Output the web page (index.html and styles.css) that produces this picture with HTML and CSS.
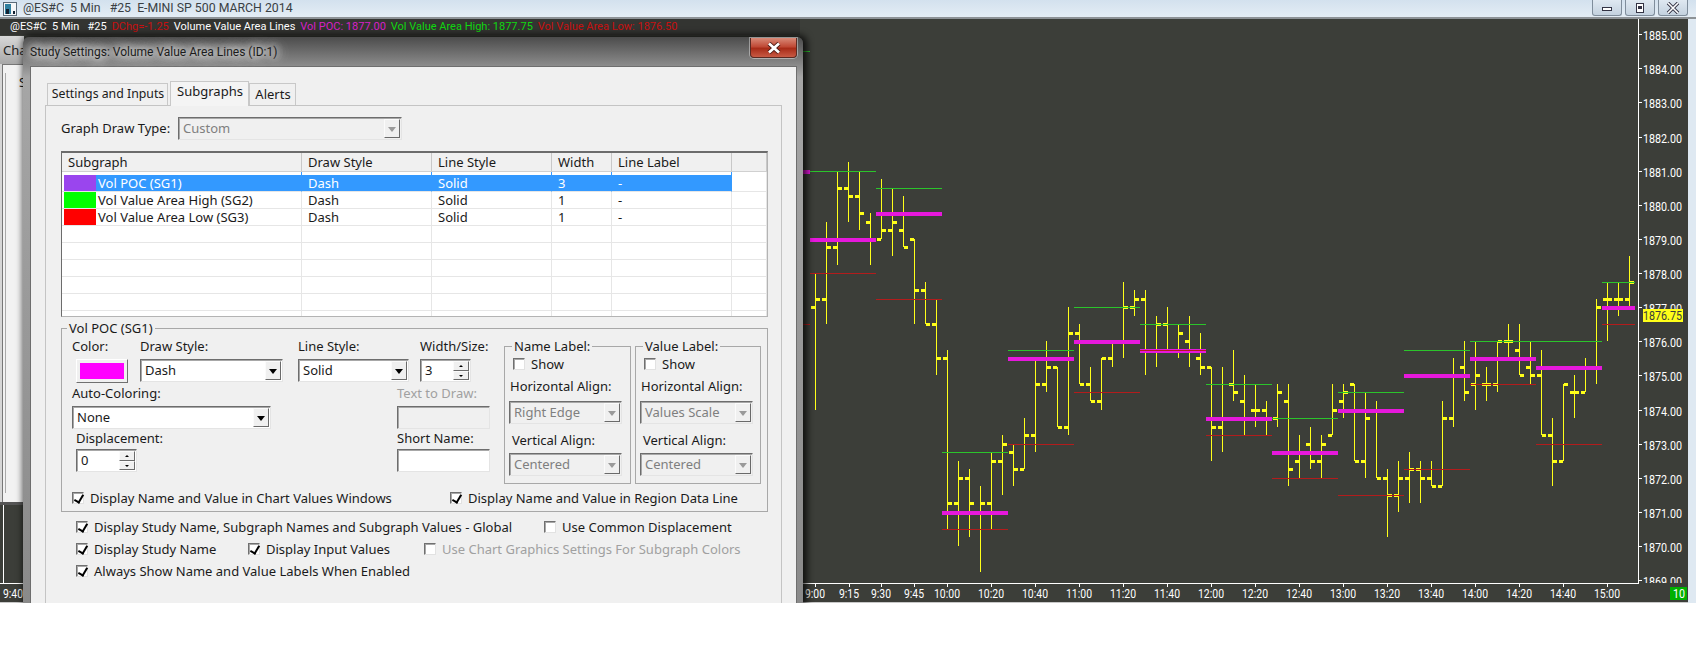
FILE: index.html
```html
<!DOCTYPE html>
<html lang="en">
<head>
    <meta charset="UTF-8">
    <meta name="viewport" content="width=device-width, initial-scale=1.0">
    <title>Study Settings: Volume Value Area Lines</title>
    <link rel="stylesheet" href="styles.css">
</head>
<body>

    <!-- Main chart window -->
    <div class="main-window">
        <div class="title-bar">
            <svg class="app-icon" width="14" height="14" viewBox="0 0 14 14">
                <rect x="0.5" y="0.5" width="13" height="13" fill="#f4f6f8" stroke="#5a6a78"/>
                <rect x="2" y="2" width="6" height="10" fill="#2f7f9f"/>
                <rect x="3" y="7" width="3" height="5" fill="#123"/>
                <rect x="10" y="9" width="2" height="3" fill="#123"/>
            </svg>
            <span class="title-text">@ES#C  5 Min   #25  E-MINI SP 500 MARCH 2014</span>
            <div class="win-buttons">
                <div class="win-btn">
                    <svg width="12" height="8" viewBox="0 0 12 8"><rect x="1.5" y="3.5" width="9" height="3" fill="#fff" stroke="#334"/></svg>
                </div>
                <div class="win-btn">
                    <svg width="12" height="10" viewBox="0 0 12 10"><rect x="2.5" y="0.5" width="7" height="9" fill="#fff" stroke="#334"/><rect x="4" y="3" width="4" height="3" fill="#334"/></svg>
                </div>
                <div class="win-btn">
                    <svg width="14" height="12" viewBox="0 0 14 12"><path d="M2 1 L12 11 M12 1 L2 11" stroke="#334" stroke-width="3.4"/><path d="M2 1 L12 11 M12 1 L2 11" stroke="#fff" stroke-width="1.6"/></svg>
                </div>
            </div>
        </div>

        <div class="chart-frame">
            <svg id="chart" class="chart" width="1688" height="584" viewBox="0 19 1688 584"></svg>
            <div class="study-line">
                <span>@ES#C  5 Min   #25</span>
                <span class="txt-dchg">DChg=-1.25</span>
                <span>Volume Value Area Lines</span>
                <span class="txt-poc">Vol POC: 1877.00</span>
                <span class="txt-high">Vol Value Area High: 1877.75</span>
                <span class="txt-low">Vol Value Area Low: 1876.50</span>
            </div>
        </div>
    </div>

    <!-- Window behind the dialog, only its left edge shows -->
    <div class="back-window">
        <div class="back-title">Chart</div>
        <div class="back-panel"><div class="back-list">Study</div></div>
    </div>

    <!-- Study settings dialog -->
    <div class="dialog">
        <div class="dialog-title">
            <span class="dialog-caption">Study Settings: Volume Value Area Lines (ID:1)</span>
            <div class="dialog-close">
                <svg width="18" height="12" viewBox="0 0 18 12"><path d="M4 1.5 L14 10.5 M14 1.5 L4 10.5" stroke="#4a1a14" stroke-width="4.4"/><path d="M4 1.5 L14 10.5 M14 1.5 L4 10.5" stroke="#fff" stroke-width="2.8"/></svg>
            </div>
        </div>

        <div class="dialog-client">
            <div class="tabs">
                <div class="tab tab-settings">Settings and Inputs</div>
                <div class="tab tab-active">Subgraphs</div>
                <div class="tab tab-alerts">Alerts</div>
            </div>

            <div class="tab-panel">
                <div class="draw-type">
                    <span class="draw-type-label">Graph Draw Type:</span>
                    <div class="combo combo-disabled combo-draw-type">Custom<i class="combo-btn"></i></div>
                </div>

                <div class="grid">
                    <table>
                        <colgroup>
                            <col class="col-name"><col class="col-draw"><col class="col-line"><col class="col-width"><col class="col-label"><col>
                        </colgroup>
                        <thead>
                            <tr><th>Subgraph</th><th>Draw Style</th><th>Line Style</th><th>Width</th><th>Line Label</th><th></th></tr>
                        </thead>
                        <tbody>
                            <tr class="row-selected">
                                <td class="cell-name"><i class="swatch swatch-purple"></i><span>Vol POC (SG1)</span></td>
                                <td>Dash</td><td>Solid</td><td>3</td><td>-</td><td class="cell-end"></td>
                            </tr>
                            <tr>
                                <td class="cell-name"><i class="swatch swatch-green"></i><span>Vol Value Area High (SG2)</span></td>
                                <td>Dash</td><td>Solid</td><td>1</td><td>-</td><td></td>
                            </tr>
                            <tr>
                                <td class="cell-name"><i class="swatch swatch-red"></i><span>Vol Value Area Low (SG3)</span></td>
                                <td>Dash</td><td>Solid</td><td>1</td><td>-</td><td></td>
                            </tr>
                            <tr><td></td><td></td><td></td><td></td><td></td><td></td></tr>
                            <tr><td></td><td></td><td></td><td></td><td></td><td></td></tr>
                            <tr><td></td><td></td><td></td><td></td><td></td><td></td></tr>
                            <tr><td></td><td></td><td></td><td></td><td></td><td></td></tr>
                            <tr><td></td><td></td><td></td><td></td><td></td><td></td></tr>
                            <tr><td></td><td></td><td></td><td></td><td></td><td></td></tr>
                        </tbody>
                    </table>
                </div>

                <!-- Subgraph group box -->
                <fieldset class="group group-main">
                    <legend>Vol POC (SG1)</legend>
                    <div class="group-body">
                        <div class="style-form">
                            <div class="form-row form-top">
                                <div class="field field-color">
                                    <label>Color:</label>
                                    <div class="color-btn"><i></i></div>
                                </div>
                                <div class="field field-draw">
                                    <label>Draw Style:</label>
                                    <div class="combo">Dash<i class="combo-btn"></i></div>
                                </div>
                                <div class="field field-line">
                                    <label>Line Style:</label>
                                    <div class="combo">Solid<i class="combo-btn"></i></div>
                                </div>
                                <div class="field field-size">
                                    <label>Width/Size:</label>
                                    <div class="spin">3<i class="spin-btns"><b></b><b></b></i></div>
                                </div>
                            </div>
                            <div class="form-row form-split form-auto">
                                <div class="field field-auto">
                                    <label>Auto-Coloring:</label>
                                    <div class="combo">None<i class="combo-btn"></i></div>
                                </div>
                                <div class="field field-text">
                                    <label class="label-disabled">Text to Draw:</label>
                                    <div class="edit edit-disabled"></div>
                                </div>
                            </div>
                            <div class="form-row form-split form-name">
                                <div class="field field-displacement">
                                    <label>Displacement:</label>
                                    <div class="spin">0<i class="spin-btns"><b></b><b></b></i></div>
                                </div>
                                <div class="field field-text">
                                    <label>Short Name:</label>
                                    <div class="edit"></div>
                                </div>
                            </div>
                        </div>

                        <fieldset class="group group-label">
                            <legend>Name Label:</legend>
                            <div class="check check-show"><i class="box"></i>Show</div>
                            <div class="align-label">Horizontal Align:</div>
                            <div class="combo combo-disabled combo-align">Right Edge<i class="combo-btn"></i></div>
                            <div class="align-label align-label-v">Vertical Align:</div>
                            <div class="combo combo-disabled combo-align">Centered<i class="combo-btn"></i></div>
                        </fieldset>

                        <fieldset class="group group-label">
                            <legend>Value Label:</legend>
                            <div class="check check-show"><i class="box"></i>Show</div>
                            <div class="align-label">Horizontal Align:</div>
                            <div class="combo combo-disabled combo-align">Values Scale<i class="combo-btn"></i></div>
                            <div class="align-label align-label-v">Vertical Align:</div>
                            <div class="combo combo-disabled combo-align">Centered<i class="combo-btn"></i></div>
                        </fieldset>
                    </div>
                    <div class="group-checks">
                        <div class="check check-chart-values"><i class="box box-on"></i>Display Name and Value in Chart Values Windows</div>
                        <div class="check"><i class="box box-on"></i>Display Name and Value in Region Data Line</div>
                    </div>
                </fieldset>

                <div class="check-row">
                    <div class="check check-global"><i class="box box-on"></i>Display Study Name, Subgraph Names and Subgraph Values - Global</div>
                    <div class="check"><i class="box"></i>Use Common Displacement</div>
                </div>
                <div class="check-row">
                    <div class="check check-study"><i class="box box-on"></i>Display Study Name</div>
                    <div class="check check-inputs"><i class="box box-on"></i>Display Input Values</div>
                    <div class="check check-disabled"><i class="box"></i>Use Chart Graphics Settings For Subgraph Colors</div>
                </div>
                <div class="check-row">
                    <div class="check"><i class="box box-on"></i>Always Show Name and Value Labels When Enabled</div>
                </div>
            </div>
        </div>
    </div>

    <script src="chart.js"></script>
</body>
</html>
```

FILE: styles.css
```css
* {
    box-sizing: border-box;
}

body {
    margin: 0;
    background-color: #ffffff;
    font-family: "Noto Sans", "Open Sans", sans-serif;
    font-size: 13px;
    color: #1a1a1a;
    overflow: hidden;
}

i {
    font-style: normal;
}

/* --- Main window --- */
.main-window {
    height: 603px;
    background: linear-gradient(90deg, #dbe6f0, #dfe9f2);
    overflow: hidden;
}

.title-bar {
    display: flex;
    align-items: flex-start;
    height: 19px;
    padding: 1px 8px 0 3px;
    background: linear-gradient(#d3e1ee, #e4edf5);
    border-bottom: 2px solid #8d9296;
}

.app-icon {
    margin-top: 1px;
}

.title-text {
    margin-left: 6px;
    line-height: 15px;
    font-family: "Roboto", sans-serif;
    font-size: 12.3px;
    color: #3a3f44;
    white-space: pre;
}

.win-buttons {
    display: flex;
    gap: 3px;
    margin-left: auto;
    margin-top: -1px;
}

.win-btn {
    display: flex;
    align-items: center;
    justify-content: center;
    width: 30px;
    height: 16px;
    background: linear-gradient(#dfe8f1, #c4d2df);
    border: 1px solid #7f8d9b;
    border-top: 0;
    border-radius: 0 0 3px 3px;
}

.chart-frame {
    position: relative;
    width: 1688px;
    height: 584px;
    background-color: #3c3e39;
}

/* sits over the top of the chart, the price scale runs up beside it */
.study-line {
    position: absolute;
    left: 0;
    top: 0;
    display: flex;
    gap: 5px;
    width: 800px;
    height: 16px;
    padding-left: 10px;
    background-color: #333431;
    color: #ffffff;
    font-family: "Roboto", sans-serif;
    font-size: 11px;
    line-height: 16px;
    white-space: pre;
}

.txt-dchg { color: #c81010; }
.txt-poc { color: #d820c8; }
.txt-high { color: #10d810; }
.txt-low { color: #c81010; }

.chart {
    display: block;
}

.chart text {
    font-family: "Roboto", sans-serif;
    font-size: 13px;
    fill: #ffffff;
}

/* --- Window behind the dialog --- */
.back-window {
    position: absolute;
    left: 0;
    top: 36px;
    width: 24px;
    height: 469px;
    overflow: hidden;
    background-color: #d6d6d6;
    border-bottom: 3px solid #555;
}

.back-title {
    height: 28px;
    padding: 6px 0 0 3px;
    background: linear-gradient(#d8d8d8, #a8a8a8);
    color: #222;
    line-height: 16px;
}

.back-panel {
    height: 440px;
    margin-left: 2px;
    padding: 8px 0 0 2px;
    background-color: #f2f2f2;
    border: 1px solid #777;
}

.back-list {
    height: 420px;
    padding: 0 0 0 13px;
    border-left: 1px solid #aaa;
    line-height: 18px;
    white-space: nowrap;
}

/* --- Dialog --- */
.dialog {
    position: absolute;
    left: 23px;
    top: 37px;
    width: 780px;
    height: 566px;
    padding: 0 6px 0 7px;
    background: linear-gradient(#4c4c4c, #8e8e8e 30px, #a6a6a6 40px, #8a8a8a);
    border-radius: 6px 6px 0 0;
    box-shadow: 2px 0 7px 2px rgba(0, 0, 0, 0.75);
    clip-path: inset(-12px -12px 0 -12px);
}

.dialog-title {
    display: flex;
    justify-content: space-between;
    height: 29px;
}

.dialog-caption {
    margin-top: 6px;
    line-height: 18px;
    font-family: "Roboto", sans-serif;
    font-size: 12px;
    color: #1c1c1c;
    text-shadow: 0 0 6px #e6e6e6, 0 0 10px #e6e6e6, 0 0 14px #e6e6e6, 0 0 14px #e6e6e6;
}

.dialog-close {
    display: flex;
    align-items: center;
    justify-content: center;
    width: 47px;
    height: 20px;
    margin-top: 1px;
    background: linear-gradient(#d98a78, #c04a36 45%, #a82c18 55%, #c85a44);
    border: 1px solid #5a2a22;
    border-top: 0;
    border-radius: 0 0 4px 4px;
    box-shadow: 0 0 0 1px rgba(255, 255, 255, 0.4);
}

.dialog-client {
    height: 537px;
    padding: 16px 14px 0;
    background-color: #f0f0f0;
    border: 1px solid #6e6e6e;
    border-bottom: 0;
}

/* --- Tabs --- */
.tabs {
    display: flex;
    align-items: flex-end;
    height: 22px;
    padding-left: 2px;
}

.tab {
    height: 22px;
    padding-left: 1px;
    background-color: #f0f0f0;
    border: 1px solid #c8c8c8;
    border-bottom: 0;
    line-height: 20px;
    text-align: center;
    white-space: nowrap;
}

.tab-settings { width: 121px; margin-right: 2px; font-size: 12.3px; }
.tab-alerts { width: 47px; }

.tab-active {
    position: relative;
    top: 1px;
    width: 79px;
    height: 25px;
    background-color: #f4f4f4;
    line-height: 19px;
}

.tab-panel {
    height: 500px;
    padding: 10px 13px 0 15px;
    background-color: #f0f0f0;
    border: 1px solid #c4c4c4;
}

.draw-type {
    display: flex;
    align-items: center;
    height: 24px;
}

.draw-type-label {
    width: 117px;
}

.combo-draw-type {
    width: 224px;
}

/* --- Common controls --- */
.combo,
.spin,
.edit {
    position: relative;
    height: 23px;
    padding-left: 4px;
    background-color: #ffffff;
    border: 1px solid;
    border-color: #6d6d6d #e4e4e4 #e4e4e4 #6d6d6d;
    box-shadow: inset 1px 1px 0 #a8a8a8;
    line-height: 21px;
}

.combo-btn {
    position: absolute;
    right: 1px;
    top: 1px;
    bottom: 1px;
    width: 16px;
    background-color: #f0f0f0;
    border: 1px solid;
    border-color: #fbfbfb #6a6a6a #6a6a6a #fbfbfb;
}

.combo-btn::after {
    content: "";
    position: absolute;
    left: 3px;
    top: 7px;
    border: 4px solid transparent;
    border-top: 5px solid #000000;
    border-bottom: 0;
}

.combo-disabled,
.edit-disabled {
    background-color: #f0f0f0;
    color: #7f7f7f;
}

.combo-disabled .combo-btn::after {
    border-top-color: #9a9a9a;
}

.spin-btns {
    position: absolute;
    right: 1px;
    top: 1px;
    bottom: 1px;
    display: flex;
    flex-direction: column;
    width: 16px;
}

.spin-btns b {
    position: relative;
    flex: 1;
    background-color: #f0f0f0;
    border: 1px solid;
    border-color: #fbfbfb #6a6a6a #6a6a6a #fbfbfb;
}

.spin-btns b::after {
    content: "";
    position: absolute;
    left: 5px;
    top: 3px;
    border: 2px solid transparent;
    border-bottom: 2px solid #000000;
    border-top: 0;
}

.spin-btns b:last-child::after {
    border-top: 2px solid #000000;
    border-bottom: 0;
}

.check {
    display: flex;
    align-items: center;
    gap: 6px;
    height: 18px;
    line-height: 18px;
    white-space: nowrap;
}

.box {
    position: relative;
    width: 12px;
    height: 12px;
    flex: none;
    background-color: #ffffff;
    border: 1px solid;
    border-color: #707070 #e2e2e2 #e2e2e2 #707070;
    box-shadow: inset 1px 1px 0 #a8a8a8;
}

.box-on::after {
    content: "";
    position: absolute;
    left: 3px;
    top: 0;
    width: 4px;
    height: 8px;
    border: solid #000000;
    border-width: 0 2px 2px 0;
    transform: rotate(30deg);
}

.check-disabled {
    color: #a0a0a0;
}

/* --- Subgraph grid --- */
.grid {
    height: 166px;
    margin-top: 11px;
    overflow: hidden;
    background-color: #ffffff;
    border: 1px solid #b4b4b4;
    border-top: 2px solid #6c6c6c;
    border-left: 1px solid #6c6c6c;
}

.grid table {
    width: 100%;
    table-layout: fixed;
    border-collapse: separate;
    border-spacing: 0;
}

.col-name { width: 240px; }
.col-draw { width: 130px; }
.col-line { width: 120px; }
.col-width { width: 60px; }
.col-label { width: 120px; }

.grid th {
    height: 18px;
    padding: 1px 0 0 6px;
    background-color: #f0f0f0;
    border-right: 1px solid #c8c8c8;
    border-bottom: 1px solid #d0d0d0;
    font-weight: normal;
    text-align: left;
    line-height: 17px;
}

.grid td {
    height: 17px;
    padding: 0 0 0 6px;
    border-right: 1px solid #e6e6e6;
    border-bottom: 1px solid #e6e6e6;
    line-height: 16px;
}

.grid tbody tr:first-child td {
    height: 20px;
    padding-top: 3px;
    background-clip: content-box;
}

.grid td.cell-name {
    padding-left: 2px;
}

.cell-name {
    white-space: nowrap;
}

.cell-name span {
    padding-left: 2px;
}

.swatch {
    display: inline-block;
    width: 32px;
    height: 16px;
    vertical-align: top;
}

.swatch-purple { background-color: #9a45ee; }
.swatch-green { background-color: #00ff00; }
.swatch-red { background-color: #ff0000; }

.row-selected td {
    color: #ffffff;
}

.grid .row-selected td {
    padding-left: 0;
    text-indent: 6px;
    background-color: #3399ff;
    border-right-color: #3399ff;
}

.grid .row-selected td.cell-name {
    padding-left: 2px;
    text-indent: 0;
}

.grid .row-selected td.cell-end {
    background: none;
    border-right-color: #e6e6e6;
}

/* --- Group boxes --- */
.group {
    min-width: 0;
    margin: 0;
    padding: 0;
    border: 1px solid #a8a8a8;
}

.group legend {
    height: 18px;
    margin-left: 5px;
    padding: 0 2px;
    line-height: 18px;
}

.group-main {
    height: 193px;
    margin-top: 2px;
}

.group-body {
    display: flex;
    gap: 4px;
    height: 146px;
}

.style-form {
    width: 428px;
    padding-left: 10px;
    margin-right: 10px;
}

.form-row {
    display: flex;
}

.form-split {
    justify-content: space-between;
}

.form-top .field label { margin-bottom: 4px; }
.form-auto { margin-top: 1px; }
.form-auto .field label { margin-bottom: 4px; }

.field label {
    display: block;
    height: 18px;
    margin-bottom: 2px;
    line-height: 18px;
    white-space: nowrap;
}

.label-disabled {
    color: #a0a0a0;
}

.field-color { width: 68px; }
.field-draw { width: 143px; margin-right: 15px; }
.field-line { width: 111px; margin-right: 11px; }
.field-size { width: 51px; }
.field-auto { width: 199px; }
.field-text { width: 93px; }
.field-displacement { width: 61px; margin-left: 4px; }

.color-btn {
    display: flex;
    align-items: center;
    justify-content: center;
    width: 52px;
    height: 24px;
    margin-left: 4px;
    background-color: #f0f0f0;
    border: 1px solid;
    border-color: #ffffff #707070 #707070 #ffffff;
}

.color-btn i {
    width: 44px;
    height: 16px;
    background-color: #ff00ff;
}

.group-label {
    flex: none;
    width: 127px;
    height: 147px;
    padding: 0 0 0 4px;
}

.group-label + .group-label {
    width: 126px;
}

.group-label legend {
    margin-left: 3px;
}

.check-show {
    margin-left: 4px;
}

.align-label {
    height: 18px;
    margin: 4px 0 6px 1px;
    line-height: 18px;
    white-space: nowrap;
}

.align-label-v {
    margin: 7px 0 4px 3px;
}

.combo-align {
    width: 113px;
}

.group-checks {
    display: flex;
    padding: 6px 0 0 10px;
}

.check-chart-values {
    width: 378px;
}

/* --- Checks below the group box --- */
.check-row {
    display: flex;
    height: 22px;
    align-items: center;
    padding-left: 15px;
}

.group-main + .check-row {
    margin-top: 4px;
}

.check-global { width: 468px; }
.check-study { width: 172px; }
.check-inputs { width: 176px; }
```

FILE: chart.js
```js
// Draws the bar chart: price bars, value area lines and both axes

const svg = document.getElementById('chart');
const NS = 'http://www.w3.org/2000/svg';

const priceY = p => Math.round(34.2 + (1885 - p) * 34.12);
const barX = i => 815 + i * 11;

// high, low, open, close for each 5 min bar, first one is 9:00
const bars = [
    [1878, 1874, 1877, 1877.25], [1879.5, 1876.5, 1877.25, 1878.75], [1881, 1878.25, 1878.75, 1880.5],
    [1881.25, 1879.5, 1880.5, 1880.25], [1881, 1879.25, 1880.25, 1879.75], [1879.75, 1878.25, 1879.5, 1879],
    [1880.75, 1879, 1879, 1879.25], [1880.5, 1878.5, 1879.25, 1879.5], [1880.25, 1878.75, 1879.25, 1878.75],
    [1879, 1876.5, 1879, 1877.5], [1877.75, 1876.5, 1877.5, 1876.5], [1877.25, 1875, 1876.5, 1875.5],
    [1875.75, 1870.5, 1875.5, 1871.25], [1872.5, 1870, 1871.25, 1872], [1872.25, 1870.25, 1872, 1871.25],
    [1871.75, 1869.25, 1871, 1871.25], [1872.75, 1870.5, 1871.25, 1872.5], [1873.25, 1871.5, 1872.5, 1873],
    [1873, 1871.75, 1872.75, 1872.25], [1873.75, 1872.25, 1872.25, 1873.25], [1875.5, 1872.75, 1873.25, 1874.75],
    [1876, 1874.5, 1874.75, 1875.25], [1875.25, 1873.5, 1875.25, 1873.5], [1877, 1873.25, 1873.5, 1876.25],
    [1876.5, 1874.75, 1876.25, 1874.75], [1875.25, 1874.25, 1874.75, 1874.25], [1875.5, 1874, 1874.25, 1875.5],
    [1876, 1875.25, 1875.5, 1876], [1877.75, 1875.5, 1876, 1877], [1877.5, 1876.75, 1877, 1877.25],
    [1877.5, 1875, 1877.25, 1875.75], [1876.75, 1875.25, 1875.75, 1876.5], [1877, 1875.75, 1876.5, 1875.75],
    [1876.5, 1875.5, 1875.75, 1876.25], [1876.75, 1875.25, 1876, 1875.75], [1876.25, 1875, 1875.5, 1875.25],
    [1875.25, 1872.5, 1875.25, 1873.5], [1875.25, 1872.75, 1873.5, 1873.75], [1875.75, 1874.25, 1874.75, 1874.5],
    [1875, 1873.25, 1874.25, 1873.75], [1874.75, 1873.5, 1874, 1874], [1874.25, 1873.25, 1874, 1873.75],
    [1874.75, 1873.5, 1873.75, 1874.5], [1874.75, 1871.75, 1874.25, 1872.25], [1873.25, 1872, 1872.5, 1872.75],
    [1873.5, 1872.25, 1873, 1872.5], [1873.25, 1872, 1872.5, 1873], [1874.75, 1873.25, 1873.25, 1874],
    [1874.75, 1873.75, 1874.25, 1874.5], [1874.75, 1872.5, 1874.75, 1872.5], [1874.5, 1872, 1872.5, 1873.75],
    [1874.25, 1872, 1874, 1872], [1872.25, 1870.25, 1872, 1871.5], [1872.5, 1871, 1871.5, 1872],
    [1872.75, 1871.25, 1872, 1872.25], [1872.5, 1871.25, 1872.25, 1872], [1872.5, 1871.75, 1872, 1871.75],
    [1874.25, 1871.75, 1871.75, 1873.75], [1875.5, 1873.5, 1873.75, 1875], [1876, 1874.25, 1875.25, 1874.5],
    [1876, 1874, 1874.75, 1875], [1875.25, 1874.25, 1874.75, 1874.75], [1876, 1874.5, 1874.75, 1876],
    [1876.5, 1875.5, 1876, 1876], [1876.5, 1875, 1875.75, 1875], [1876, 1874.75, 1875.25, 1875],
    [1875.75, 1873.25, 1875, 1873.25], [1873.75, 1871.75, 1873.25, 1872.5], [1874.75, 1872.5, 1872.5, 1874.75],
    [1875, 1873.75, 1874.5, 1874.5], [1875.5, 1874.5, 1874.5, 1875.25], [1877.25, 1874.75, 1875.25, 1877],
    [1877.75, 1876, 1877.25, 1877.25], [1877.75, 1876.75, 1877.25, 1877.25], [1878.5, 1877, 1877.25, 1877.75]
];

// value area lines for each half hour: x from, x to, poc, high, low
const periods = [
    [744, 810, 1881, 1884.5, 1876.5],
    [810, 876, 1879, 1881, 1878],
    [876, 942, 1879.75, 1880.5, 1877.25],
    [942, 1008, 1871, 1872.75, 1870.5],
    [1008, 1074, 1875.5, 1875.75, 1873],
    [1074, 1140, 1876, 1877, 1874.5],
    [1140, 1206, 1875.75, 1876.5, 1875.75],
    [1206, 1272, 1873.75, 1874.75, 1873.25],
    [1272, 1338, 1872.75, 1873.75, 1872],
    [1338, 1404, 1874, 1874.5, 1871.5],
    [1404, 1470, 1875, 1875.75, 1872.25],
    [1470, 1536, 1875.5, 1876, 1874.75],
    [1536, 1602, 1875.25, 1876, 1873],
    [1602, 1635, 1877, 1877.75, 1876.5]
];

const timeLabels = [
    ['9:00', 815], ['9:15', 849], ['9:30', 881], ['9:45', 914], ['10:00', 947], ['10:20', 991], ['10:40', 1035],
    ['11:00', 1079], ['11:20', 1123], ['11:40', 1167], ['12:00', 1211], ['12:20', 1255], ['12:40', 1299],
    ['13:00', 1343], ['13:20', 1387], ['13:40', 1431], ['14:00', 1475], ['14:20', 1519], ['14:40', 1563], ['15:00', 1607]
];

function add(tag, attrs, content) {
    const el = document.createElementNS(NS, tag);
    for (const key in attrs) el.setAttribute(key, attrs[key]);
    if (content) el.textContent = content;
    svg.appendChild(el);
    return el;
}

function rect(x, y, width, height, fill) {
    add('rect', { x, y, width, height, fill });
}

// --- Price bars ---
bars.forEach((bar, i) => {
    const x = barX(i);
    const top = priceY(bar[0]);
    rect(x, top, 1, priceY(bar[1]) - top, '#ffff19');
    rect(x - 4, priceY(bar[2]) - 1, 4, 3, '#ffff19');
    rect(x + 1, priceY(bar[3]) - 1, 4, 3, '#ffff19');
});

// --- Value area lines ---
periods.forEach(p => {
    rect(p[0], priceY(p[3]), p[1] - p[0], 1, '#2bc42b');
    rect(p[0], priceY(p[2]) - 1, p[1] - p[0], 4, '#e618dc');
    rect(p[0], priceY(p[4]), p[1] - p[0], 1, '#b31c1c');
});

// --- Price scale ---
for (let price = 1885; price >= 1869; price--) {
    const y = priceY(price);
    rect(1638, y, 4, 1, '#ffffff');
    add('text', { x: 1643, y: y + 6, textLength: 39, lengthAdjust: 'spacingAndGlyphs' }, price + '.00');
}
rect(1638, 19, 1, 565, '#ffffff');

// last price marker
rect(1643, 309, 40, 13, '#ffff19');
add('text', { x: 1643, y: 320, textLength: 39, lengthAdjust: 'spacingAndGlyphs', style: 'fill:#3c3e39' }, '1876.75');

// --- Time scale, also hides the part of the last price label below the plot ---
rect(0, 583, 1688, 20, '#3c3e39');
rect(0, 583, 1639, 1, '#ffffff');
timeLabels.forEach(t => {
    const wide = t[0].length > 4;
    rect(t[1], 583, 1, 4, '#ffffff');
    add('text', { x: t[1] - (wide ? 13 : 10), y: 598, textLength: wide ? 26 : 20, lengthAdjust: 'spacingAndGlyphs' }, t[0]);
});
add('text', { x: 3, y: 598, textLength: 20, lengthAdjust: 'spacingAndGlyphs' }, '9:40');
rect(3, 505, 1, 78, '#ffffff');

// bar count box
rect(1670, 587, 17, 13, '#00b000');
add('text', { x: 1673, y: 598, textLength: 12, lengthAdjust: 'spacingAndGlyphs' }, '10');

// light line along the bottom edge
rect(0, 602, 1688, 1, '#c8c8c8');
```
